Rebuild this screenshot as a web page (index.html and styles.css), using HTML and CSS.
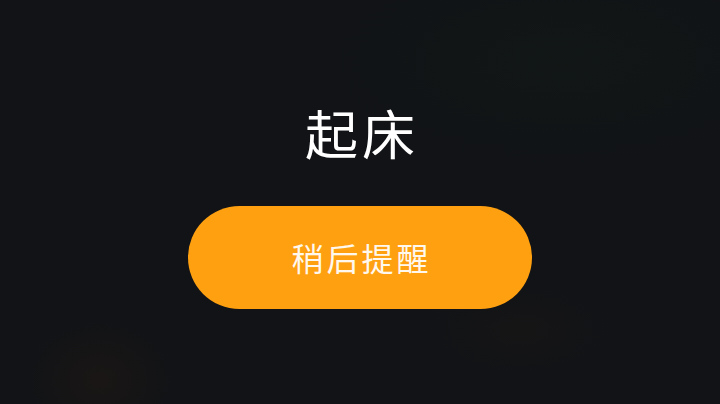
FILE: index.html
```html
<!DOCTYPE html>
<html lang="zh">
<head>
<meta charset="utf-8">
<link rel="stylesheet" href="styles.css">
</head>
<body>
<main class="screen">
  <h1 class="title">起床</h1>
  <button class="snooze">稍后提醒</button>
</main>
</body>
</html>
```
FILE: styles.css
```css
html, body {
  margin: 0;
  padding: 0;
  width: 720px;
  height: 404px;
  overflow: hidden;
}
body {
  font-family: "Noto Sans CJK SC", "Noto Sans", sans-serif;
  background: #111315;
}
.screen {
  width: 720px;
  height: 404px;
  box-sizing: border-box;
  display: flex;
  flex-direction: column;
  align-items: center;
  padding-top: 99px;
  background:
    radial-gradient(ellipse 110px 90px at 100px 380px, rgba(50, 30, 20, 0.28), transparent 70%),
    radial-gradient(ellipse 140px 70px at 520px 330px, rgba(40, 28, 22, 0.22), transparent 70%),
    radial-gradient(ellipse 360px 160px at 560px 60px, rgba(18, 26, 22, 0.5), transparent 70%),
    #111316;
}
.title {
  margin: 0;
  font-size: 53px;
  font-weight: 400;
  line-height: 66px;
  color: #ffffff;
  letter-spacing: 4px;
  padding-left: 4px;
}
.snooze {
  margin-top: 41px;
  width: 344px;
  height: 103px;
  border: none;
  border-radius: 52px;
  background: #ffa010;
  color: #fff8ee;
  font-family: "Noto Sans CJK SC", "Noto Sans", sans-serif;
  font-size: 32px;
  font-weight: 400;
  letter-spacing: 3px;
  padding: 0 0 2px 3px;
}
```
